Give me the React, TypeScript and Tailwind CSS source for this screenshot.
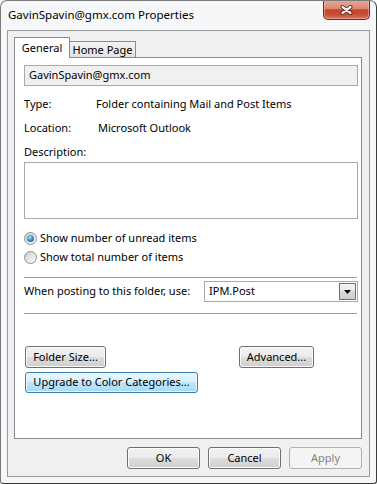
const btn =
  'flex h-[22px] items-center justify-center rounded-[3px] border border-[#707070] bg-[linear-gradient(#f2f2f2_0%,#ebebeb_50%,#dddddd_50%,#cfcfcf_100%)] shadow-[inset_0_0_0_1px_#fbfbfb] text-black'

const CloseButton = () => (
  <div className="-mt-px flex h-[20px] w-[47px] items-center justify-center rounded-b-[5px] border border-t-0 border-[#6e2a1c] bg-[linear-gradient(#eaa898_0%,#dd8672_45%,#c4442a_52%,#c64c32_75%,#d9775e_100%)] shadow-[inset_0_0_0_1px_rgba(255,210,200,0.45)]">
    <svg width="15" height="12" viewBox="0 0 15 12">
      <path d="M3.5 3 L11.5 9 M11.5 3 L3.5 9" stroke="#4a1e14" strokeWidth="4" strokeLinecap="round" />
      <path d="M3.5 3 L11.5 9 M11.5 3 L3.5 9" stroke="#f4f4f4" strokeWidth="2.2" strokeLinecap="round" />
    </svg>
  </div>
)

const Radio = ({ checked, label }: { checked?: boolean; label: string }) => (
  <div className="flex h-[19px] items-center">
    <span className="flex h-[13px] w-[13px] items-center justify-center rounded-full border border-[#8e8f8f] bg-[linear-gradient(135deg,#c9c9c9_0%,#e6e6e6_50%,#fbfbfb_100%)]">
      {checked && (
        <span className="h-[7px] w-[7px] rounded-full bg-[radial-gradient(circle_at_40%_35%,#a6e0fb_0%,#2b85c4_55%,#0b4a80_100%)]" />
      )}
    </span>
    <span className="ml-[3px]">{label}</span>
  </div>
)

export default function App() {
  return (
    <div className="flex h-[484px] w-[377px] flex-col overflow-hidden rounded-t-[7px] rounded-b-[3px] border border-[#7a7a7a] border-r-[#3a3a3a] border-b-[#3a3a3a] bg-[#f6f7f8] font-['Noto_Sans',sans-serif] text-[11px] text-black">
      {/* title bar */}
      <div className="flex h-[29px] shrink-0 items-start justify-between pl-[7px] pr-[6px]">
        <span className="mt-[6px] text-[11.5px] leading-[16px]">GavinSpavin@gmx.com Properties</span>
        <CloseButton />
      </div>

      {/* client area */}
      <div className="mx-[6px] flex h-[447px] shrink-0 flex-col border border-[#9a9a9a] bg-[#f0f0f0] px-[6px] pt-[6px]">
        {/* tabs */}
        <div className="flex h-[20px] items-end">
          <div className="relative z-10 -mb-px flex h-[21px] w-[56px] items-center justify-center border border-b-0 border-[#898c95] bg-white">
            General
          </div>
          <div className="flex h-[16px] w-[66px] items-center justify-center border border-b-0 border-l-0 border-[#898c95] bg-[linear-gradient(#f3f3f3,#e3e3e3)] pt-[1px]">
            Home Page
          </div>
        </div>

        {/* panel */}
        <div className="flex h-[382px] w-[348px] flex-col border border-[#898c95] bg-white pl-[9px]">
          <div className="mt-[7px] flex h-[21px] w-[334px] items-center border border-[#a9a9a9] bg-[#f0f0f0] pl-[4px]">
            GavinSpavin@gmx.com
          </div>

          <div className="mt-[6px] flex h-[24px] items-center">
            <span className="w-[72px]">Type:</span>
            <span>Folder containing Mail and Post Items</span>
          </div>
          <div className="flex h-[24px] items-center">
            <span className="w-[74px]">Location:</span>
            <span>Microsoft Outlook</span>
          </div>
          <div className="mt-[4px] flex h-[16px] items-center">Description:</div>
          <div className="mt-[2px] h-[57px] w-[334px] border border-[#a9a9a9] bg-white" />

          <div className="mt-[10px]">
            <Radio checked label="Show number of unread items" />
            <Radio label="Show total number of items" />
          </div>

          <div className="mt-[10px] h-px w-[333px] bg-[#a0a0a0]" />

          <div className="mt-[3px] flex h-[21px] items-center">
            <span className="w-[180px]">When posting to this folder, use:</span>
            <div className="flex h-[21px] w-[154px] items-center justify-between border border-[#a9a9a9] bg-white pl-[4px] pr-px">
              <span>IPM.Post</span>
              <span className="flex h-[17px] w-[17px] items-center justify-center border border-[#6f6f6f] bg-[linear-gradient(#f4f4f4_0%,#e8e8e8_50%,#d8d8d8_50%,#cdcdcd_100%)]">
                <svg width="7" height="4" viewBox="0 0 7 4">
                  <path d="M0 0 H7 L3.5 4 Z" fill="#000" />
                </svg>
              </span>
            </div>
          </div>

          <div className="mt-[11px] h-px w-[333px] bg-[#a0a0a0]" />

          <div className="mt-[32px] flex w-[290px] justify-between pl-px">
            <div className={`${btn} w-[81px]`}>Folder Size...</div>
            <div className={`${btn} w-[75px]`}>Advanced...</div>
          </div>
          <div className="mt-[4px] pl-px">
            <div className="flex h-[21px] w-[173px] items-center justify-center rounded-[3px] border border-[#3c7fb1] bg-[linear-gradient(#eaf6fd_0%,#d9f0fc_50%,#bee6fd_50%,#a7d9f5_100%)] shadow-[inset_0_0_0_1px_#e8f6fd]">
              Upgrade to Color Categories...
            </div>
          </div>
        </div>

        {/* dialog buttons */}
        <div className="mt-[8px] flex w-[348px] justify-end gap-[8px]">
          <div className={`${btn} w-[73px]`}>OK</div>
          <div className={`${btn} w-[73px]`}>Cancel</div>
          <div className="flex h-[22px] w-[73px] items-center justify-center rounded-[3px] border border-[#adb2b5] bg-[#f4f4f4] text-[#838383]">
            Apply
          </div>
        </div>
      </div>
    </div>
  )
}
